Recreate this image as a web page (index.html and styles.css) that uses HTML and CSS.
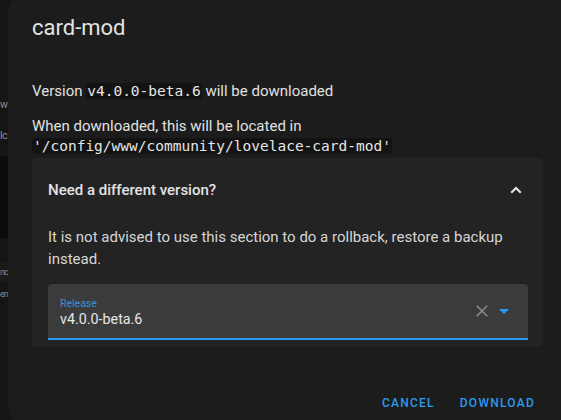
FILE: index.html
```html
<!DOCTYPE html>
<html lang="en">
<head>
<meta charset="utf-8">
<title>card-mod</title>
<link rel="stylesheet" href="styles.css">
</head>
<body>
<div class="page">
  <aside class="behind">
    <div class="seg seg-a">
      <div class="frag">w</div>
      <div class="frag frag-lc">lc</div>
    </div>
    <div class="seg seg-b"></div>
    <div class="seg seg-c"></div>
    <div class="seg seg-d"><div class="frag frag-tight">nc</div></div>
    <div class="seg seg-e"><div class="frag frag-tight">en</div></div>
  </aside>
  <section class="dialog">
    <h2 class="title">card-mod</h2>
    <div class="content">
      <p class="line">Version <code>v4.0.0-beta.6</code> will be downloaded</p>
      <p class="line line-gap">When downloaded, this will be located in <code>'/config/www/community/lovelace-card-mod'</code></p>
      <div class="panel">
        <div class="panel-head">
          <span class="panel-title">Need a different version?</span>
          <svg class="chevron" width="12" height="8" viewBox="0 0 12 8"><path d="M1.2 6.8 L6 2 L10.8 6.8" fill="none" stroke="#e3e3e3" stroke-width="2.2"/></svg>
        </div>
        <div class="panel-body">
          <p class="note">It is not advised to use this section to do a rollback, restore a backup instead.</p>
          <div class="field">
            <div class="field-text">
              <span class="label">Release</span>
              <span class="value">v4.0.0-beta.6</span>
            </div>
            <svg class="clear" width="12" height="12" viewBox="0 0 12 12"><path d="M0.8 0.8 L11.2 11.2 M11.2 0.8 L0.8 11.2" stroke="#8d8d8d" stroke-width="1.5" fill="none"/></svg>
            <svg class="caret" width="10" height="5" viewBox="0 0 10 5"><path d="M0 0 L10 0 L5 5 Z" fill="#2b9af0"/></svg>
          </div>
        </div>
      </div>
    </div>
    <div class="actions">
      <button class="btn">Cancel</button>
      <button class="btn">Download</button>
    </div>
  </section>
</div>
</body>
</html>
```

FILE: styles.css
```css
html, body {
  margin: 0;
  padding: 0;
  height: 420px;
  overflow: hidden;
  background: #151515;
}

.page {
  display: flex;
  align-items: flex-start;
  height: 420px;
  font-family: Roboto, "Noto Sans", sans-serif;
}

.behind {
  flex: none;
  width: 8px;
  height: 420px;
  display: flex;
  flex-direction: column;
  overflow: hidden;
  font-size: 10.5px;
  letter-spacing: -0.6px;
  color: #8c8c8c;
}

.seg { flex: none; }
.seg-a { height: 156px; background: #151515; padding-top: 97px; box-sizing: border-box; }
.seg-b { height: 82px; background: #0c0c0c; }
.seg-c { height: 24px; background: #151515; }
.seg-d { height: 20px; background: #1a1a1a; padding-top: 2px; box-sizing: border-box; }
.seg-e { flex: 1; background: #151515; padding-top: 4px; }

.frag {
  white-space: nowrap;
  height: 16px;
  line-height: 16px;
}
.frag-lc { margin-top: 15px; }
.frag-tight { font-size: 9px; letter-spacing: -0.9px; }

.dialog {
  flex: none;
  width: 559px;
  height: 447px;
  margin-top: -14px;
  box-sizing: border-box;
  padding: 27.5px 0 11.6px;
  background: #1c1c1c;
  border-radius: 28px;
  display: flex;
  flex-direction: column;
  color: #e1e1e1;
}

.title {
  margin: 0;
  padding: 0 24px;
  font-size: 22px;
  line-height: 28px;
  font-weight: 400;
  color: #e3e3e3;
}

.content {
  padding: 0 24px;
}

.line {
  margin: 39.5px 0 0;
  font-size: 15px;
  line-height: 20px;
}
.line-gap { margin-top: 15px; }

code {
  font-family: "DejaVu Sans Mono", monospace;
  font-size: 14.5px;
  line-height: 1;
  background: #131313;
  padding: 0 1px;
  border-radius: 3px;
  white-space: nowrap;
  color: #e6e6e6;
}

.panel {
  margin-top: 2px;
  background: #232323;
  border-radius: 4px;
}

.panel-head {
  height: 64px;
  display: flex;
  align-items: center;
  justify-content: space-between;
  padding: 0 21px 0 16px;
}

.panel-title {
  font-size: 15px;
  line-height: 20px;
  font-weight: 500;
  color: #e3e3e3;
}

.chevron { display: block; }

.panel-body {
  padding: 5.4px 15px 7px 16px;
}

.note {
  margin: 0 0 14px;
  font-size: 15px;
  line-height: 21.5px;
  color: #d6d6d6;
}

.field {
  height: 54px;
  background: #3b3b3b;
  border-radius: 4px 4px 0 0;
  border-bottom: 2px solid #2b9af0;
  display: flex;
  align-items: center;
  padding: 0 19px 0 12px;
}

.field-text {
  flex: 1;
  display: flex;
  flex-direction: column;
  padding-top: 1px;
}

.label {
  font-size: 10.5px;
  line-height: 14px;
  color: #3a91d6;
}

.value {
  font-size: 14.3px;
  line-height: 16px;
  color: #e6e6e6;
}

.clear { display: block; margin-right: 11px; }
.caret { display: block; }

.actions {
  margin-top: auto;
  display: flex;
  justify-content: flex-end;
  gap: 9px;
  padding: 0 24px;
}

.btn {
  font-family: Roboto, "Noto Sans", sans-serif;
  font-size: 12px;
  font-weight: 500;
  letter-spacing: 1.25px;
  text-transform: uppercase;
  line-height: 36px;
  height: 36px;
  padding: 0 8px;
  border: none;
  background: transparent;
  color: #2b9af0;
}
```
